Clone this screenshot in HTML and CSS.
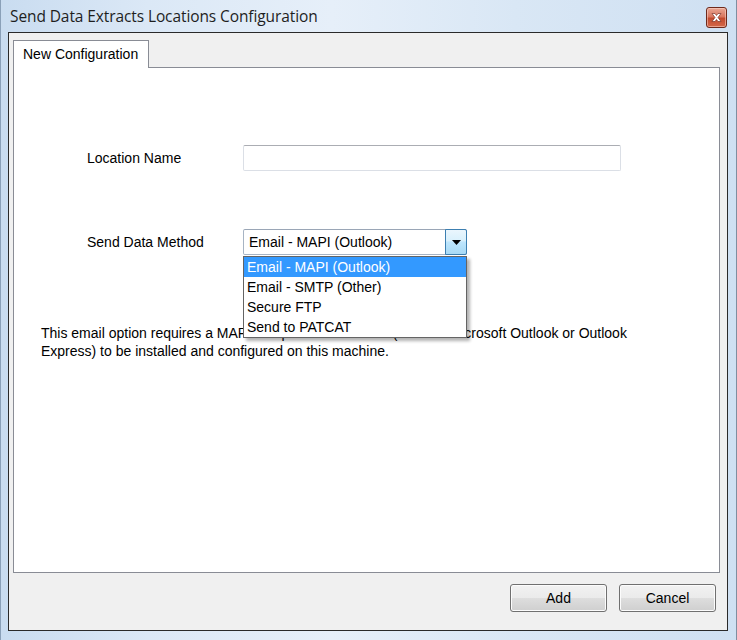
FILE: index.html
```html
<!DOCTYPE html>
<html>
<head>
<meta charset="utf-8">
<link rel="stylesheet" href="styles.css">
</head>
<body>
<div class="window">
  <div class="titlebar">
    <span class="title">Send Data Extracts Locations Configuration</span>
    <span class="close">
      <svg width="11" height="9" viewBox="0 0 11 9"><path d="M1 0.5h3l1.5 2 1.5-2h3l-3 4 3 4h-3l-1.5-2-1.5 2h-3l3-4z" fill="#fff" stroke="#6b2418" stroke-width="0.6"/></svg>
    </span>
  </div>
  <div class="client">
    <div class="tabs"><div class="tab">New Configuration</div></div>
    <div class="panel">
      <div class="form">
        <div class="label">Location Name</div>
        <div class="textbox"></div>
        <div class="label">Send Data Method</div>
        <div class="combo">
          <span class="combo-text">Email - MAPI (Outlook)</span>
          <span class="combo-btn"><svg width="9" height="5" viewBox="0 0 9 5"><path d="M0 0h9L4.5 5z" fill="#000"/></svg></span>
          <div class="list">
            <div class="item selected">Email - MAPI (Outlook)</div>
            <div class="item">Email - SMTP (Other)</div>
            <div class="item">Secure FTP</div>
            <div class="item">Send to PATCAT</div>
          </div>
        </div>
      </div>
      <p class="desc">This email option requires a MAPI compliant email client (such as Microsoft Outlook or Outlook<br>Express) to be installed and configured on this machine.</p>
    </div>
    <div class="footer">
      <button class="btn">Add</button>
      <button class="btn">Cancel</button>
    </div>
  </div>
</div>
</body>
</html>
```
FILE: styles.css
```css
html, body { margin: 0; padding: 0; }
body { width: 737px; height: 640px; overflow: hidden; font-family: "Liberation Sans", Arial, sans-serif; font-size: 14px; color: #000; }
.window {
  width: 737px; height: 640px; box-sizing: border-box;
  padding: 0 8px 9px 7px;
  display: flex; flex-direction: column;
  background: linear-gradient(90deg, #c9dcf0 0%, #dbe8f6 20%, #e6eff9 45%, #d9e7f5 70%, #cfe0f2 100%);
  border-left: 1px solid #8aa0b8;
  border-right: 1px solid #7f8ea0;
}
.titlebar {
  height: 32px; flex: none;
  display: flex; align-items: center; justify-content: space-between;
  padding-left: 2px; padding-right: 1px;
}
.title { font-family: "Open Sans", "Noto Sans", sans-serif; font-size: 15.5px; color: #1e1e1e; letter-spacing: -0.1px; }
.close {
  width: 19px; height: 19px; margin-top: 3px;
  border: 1px solid #6e2a1c; border-radius: 3px;
  background: linear-gradient(180deg, #e9a794 0%, #d9775f 45%, #c24a2e 55%, #d4694a 100%);
  display: flex; align-items: center; justify-content: center;
  box-shadow: inset 0 0 0 1px rgba(255,220,210,0.5);
}
.client {
  flex: 1; display: flex; flex-direction: column;
  border: 1px solid #2a2a2a; background: #f0f0f0;
  padding: 7px 0 0 4px;
}
.tabs { display: flex; height: 27px; flex: none; }
.tab {
  width: 136px; height: 28px; box-sizing: border-box;
  border: 1px solid #898c95; border-bottom: none;
  background: #fff; position: relative; z-index: 1;
  padding: 4px 0 0 9px; line-height: 18px;
}
.panel {
  height: 506px; box-sizing: border-box; flex: none;
  margin-right: 7px;
  border: 1px solid #898c95; background: #fff;
}
.form {
  display: grid; grid-template-columns: 156px auto; grid-auto-rows: 26px;
  row-gap: 58px; align-items: center;
  padding: 77px 0 0 73px;
}
.label { line-height: 18px; }
.textbox {
  width: 378px; height: 26px; box-sizing: border-box;
  border: 1px solid #dbdfe6; border-top-color: #abadb3; border-radius: 2px; background: #fff;
}
.combo {
  width: 224px; height: 26px; box-sizing: border-box; position: relative;
  border: 1px solid #a7b4c4; border-top-color: #9aa6b6; border-radius: 2px; background: #fff;
  display: flex; align-items: stretch;
}
.combo-text { flex: 1; padding-left: 5px; line-height: 24px; }
.combo-btn {
  width: 20px; border: 1px solid #3c7fb1; margin: -1px -1px -1px 0; border-radius: 0 2px 2px 0;
  background: linear-gradient(180deg, #eaf6fd 0%, #d9f0fc 45%, #bee6fd 50%, #a7d9f5 100%);
  display: flex; align-items: center; justify-content: center;
}
.list {
  position: absolute; left: -1px; top: 26px; width: 224px; box-sizing: border-box;
  border: 1px solid #646464; background: #fff;
  box-shadow: 3px 3px 3px rgba(0,0,0,0.3);
  z-index: 2;
}
.item { height: 20px; line-height: 20px; padding-left: 3px; }
.item.selected { background: #3399ff; color: #fff; }
.desc { margin: 69px 0 0 27px; line-height: 18px; }
.footer {
  display: flex; justify-content: flex-end; gap: 12px;
  padding: 11px 11px 0 0;
}
.btn {
  width: 97px; height: 28px; box-sizing: border-box;
  font-family: "Liberation Sans", Arial, sans-serif; font-size: 14px; color: #000;
  border: 1px solid #707070; border-radius: 3px;
  background: linear-gradient(180deg, #f2f2f2 0%, #ebebeb 48%, #dddddd 52%, #cfcfcf 100%);
  box-shadow: inset 0 0 0 1px #fcfcfc;
  padding: 0;
}
```
